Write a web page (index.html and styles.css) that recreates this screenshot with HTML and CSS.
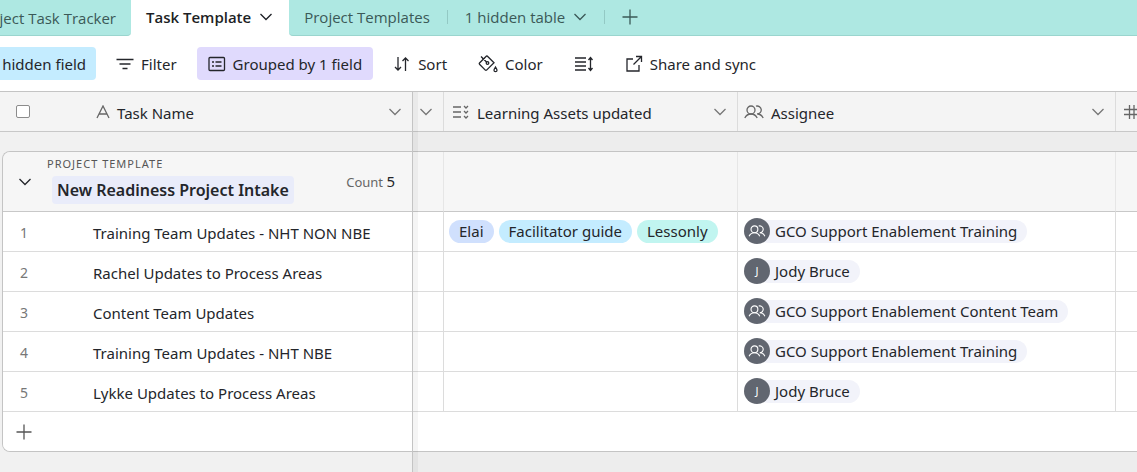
FILE: index.html
```html
<!DOCTYPE html>
<html lang="en">

<head>
    <meta charset="UTF-8">
    <meta name="viewport" content="width=device-width, initial-scale=1.0">
    <title>Task Template</title>
    <link rel="stylesheet" href="styles.css">
</head>

<body>

    <!-- Shared icons -->
    <svg class="sprite" aria-hidden="true">
        <symbol id="chevron" viewBox="0 0 14 14"><path d="M1.5 4 7 9.500 12.500 4" /></symbol>
        <symbol id="plus" viewBox="0 0 16 16"><path d="M8 .5v15M.5 8h15" /></symbol>
        <symbol id="people" viewBox="0 0 20 14">
            <circle cx="7" cy="5" r="4" />
            <path d="M.8 13C2 10.500 4.200 9 7 9s5 1.500 6.200 4M12 1.200A4 4 0 1 1 13.200 9c2.600 0 4.800 1.500 6 4" />
        </symbol>
    </svg>

    <!-- Table Tabs -->
    <nav class="tabs">
        <a href="#" class="tab tab-first"><span>Project Task Tracker</span></a>
        <a href="#" class="tab tab-active">Task Template
            <svg class="icon chevron"><use href="#chevron" /></svg>
        </a>
        <div class="tabs-rest">
            <a href="#" class="tab">Project Templates</a>
            <span class="divider"></span>
            <button type="button" class="tab">1 hidden table
                <svg class="icon chevron"><use href="#chevron" /></svg>
            </button>
            <span class="divider"></span>
            <button type="button" class="tab" aria-label="Add table">
                <svg class="icon plus"><use href="#plus" /></svg>
            </button>
        </div>
    </nav>

    <!-- View Toolbar -->
    <div class="toolbar">
        <button type="button" class="tool tool-hidden"><span>1 hidden field</span></button>
        <button type="button" class="tool">
            <svg class="icon" width="18" height="16" viewBox="0 0 18 16"><path d="M.5 3.500h17M3.500 8h11M6.500 12.500h5" /></svg>
            Filter
        </button>
        <button type="button" class="tool tool-grouped">
            <svg class="icon" width="18" height="16" viewBox="0 0 18 16">
                <rect x="1" y="1.500" width="15.500" height="13" rx="1" />
                <path d="M4 6h2M7.500 6h6M4 10h2M7.500 10h6" />
            </svg>
            Grouped by 1 field
        </button>
        <button type="button" class="tool">
            <svg class="icon" width="18" height="16" viewBox="0 0 18 16"><path d="M5 1v13M2 11l3 3 3-3M12.500 15V2M9.500 5l3-3 3 3" /></svg>
            Sort
        </button>
        <button type="button" class="tool">
            <svg class="icon" width="20" height="20" viewBox="0 0 20 20">
                <path d="M3 2.500l6 6M8.500 2 1.500 9a1 1 0 0 0 0 1.300l5.800 5.800a1 1 0 0 0 1.300 0L16 8.800 9.200 2a.5.5 0 0 0-.7 0Z" />
                <circle cx="9.500" cy="9" r="1.300" />
                <path d="M17.500 13c1 1.500 1.500 2.300 1.500 3.200a1.500 1.500 0 0 1-3 0c0-.9.500-1.700 1.500-3.200Z" />
            </svg>
            Color
        </button>
        <button type="button" class="tool" aria-label="Row height">
            <svg class="icon" width="20" height="16" viewBox="0 0 20 16">
                <path d="M1 2h11M1 6h11M1 10h11M1 14h11M16.500 2v12M14.500 4l2-2.500 2 2.500M14.500 12l2 2.500 2-2.500" />
            </svg>
        </button>
        <button type="button" class="tool">
            <svg class="icon" width="18" height="18" viewBox="0 0 18 18">
                <path d="M8 4H2v12h12v-6M8.500 9.500 16 2M11 1.500h5.500V7" />
            </svg>
            Share and sync
        </button>
    </div>

    <!-- Records Grid -->
    <main class="grid">
        <table>
            <thead>
                <tr>
                    <th class="name-head">
                        <input type="checkbox" aria-label="Select all records">
                        <svg class="icon field-icon" width="14" height="14" viewBox="0 0 14 14"><path d="M1 13 7 1l6 12M3 9h8" /></svg>
                        <span>Task Name</span>
                        <button type="button" aria-label="Task Name menu"><svg class="icon chevron"><use href="#chevron" /></svg></button>
                    </th>
                    <th class="narrow">
                        <button type="button" aria-label="Field menu"><svg class="icon chevron"><use href="#chevron" /></svg></button>
                    </th>
                    <th>
                        <svg class="icon field-icon" width="18" height="14" viewBox="0 0 18 14">
                            <path d="M1 2h8M1 7h8M1 12h8M12 1l2 2 2-2M12 6l2 2 2-2M12 11l2 2 2-2" />
                        </svg>
                        <span>Learning Assets updated</span>
                        <button type="button" aria-label="Learning Assets updated menu"><svg class="icon chevron"><use href="#chevron" /></svg></button>
                    </th>
                    <th class="assignee-head">
                        <svg class="icon field-icon" width="20" height="14"><use href="#people" /></svg>
                        <span>Assignee</span>
                        <button type="button" aria-label="Assignee menu"><svg class="icon chevron"><use href="#chevron" /></svg></button>
                    </th>
                    <th>
                        <svg class="icon field-icon" width="16" height="16" viewBox="0 0 16 16"><path d="M5.500 1v14M10 1v14M0 5.500h16M0 10.500h16" /></svg>
                    </th>
                </tr>
            </thead>
            <tbody>
                <tr class="group">
                    <td class="group-head">
                        <button type="button" aria-label="Collapse group"><svg class="icon chevron"><use href="#chevron" /></svg></button>
                        <div class="group-title">
                            <span class="group-field">PROJECT TEMPLATE</span>
                            <span class="group-value">New Readiness Project Intake</span>
                        </div>
                        <span class="count">Count <b>5</b></span>
                    </td>
                    <td></td>
                    <td></td>
                    <td></td>
                    <td></td>
                </tr>
                <tr>
                    <td class="name"><span class="number">1</span>Training Team Updates - NHT NON NBE</td>
                    <td></td>
                    <td>
                        <span class="pill blue">Elai</span>
                        <span class="pill cyan">Facilitator guide</span>
                        <span class="pill teal">Lessonly</span>
                    </td>
                    <td class="assignee">
                        <span class="avatar"><svg class="icon" width="18" height="12"><use href="#people" /></svg></span>
                        <span class="person">GCO Support Enablement Training</span>
                    </td>
                    <td></td>
                </tr>
                <tr>
                    <td class="name"><span class="number">2</span>Rachel Updates to Process Areas</td>
                    <td></td>
                    <td></td>
                    <td class="assignee"><span class="avatar">J</span><span class="person">Jody Bruce</span></td>
                    <td></td>
                </tr>
                <tr>
                    <td class="name"><span class="number">3</span>Content Team Updates</td>
                    <td></td>
                    <td></td>
                    <td class="assignee">
                        <span class="avatar"><svg class="icon" width="18" height="12"><use href="#people" /></svg></span>
                        <span class="person">GCO Support Enablement Content Team</span>
                    </td>
                    <td></td>
                </tr>
                <tr>
                    <td class="name"><span class="number">4</span>Training Team Updates - NHT NBE</td>
                    <td></td>
                    <td></td>
                    <td class="assignee">
                        <span class="avatar"><svg class="icon" width="18" height="12"><use href="#people" /></svg></span>
                        <span class="person">GCO Support Enablement Training</span>
                    </td>
                    <td></td>
                </tr>
                <tr>
                    <td class="name"><span class="number">5</span>Lykke Updates to Process Areas</td>
                    <td></td>
                    <td></td>
                    <td class="assignee"><span class="avatar">J</span><span class="person">Jody Bruce</span></td>
                    <td></td>
                </tr>
                <tr class="add-row">
                    <td colspan="5">
                        <button type="button" aria-label="Add record"><svg class="icon plus"><use href="#plus" /></svg></button>
                    </td>
                </tr>
            </tbody>
        </table>
        <div class="freeze-line"></div>
    </main>

</body>

</html>
```
FILE: styles.css
```css
* {
    box-sizing: border-box;
}

body {
    margin: 0;
    min-height: 100vh;
    display: flex;
    flex-direction: column;
    font-family: "Noto Sans", "Open Sans", sans-serif;
    font-size: 15px;
    line-height: 20px;
    color: #24262b;
    background: #fff;
    overflow-x: hidden;
}

button {
    font: inherit;
    color: inherit;
    background: none;
    border: none;
    padding: 0;
    display: flex;
    align-items: center;
    cursor: pointer;
}

.sprite {
    display: none;
}

.icon {
    fill: none;
    stroke: currentColor;
    stroke-width: 1.3;
    flex: none;
}

.chevron {
    width: 14px;
    height: 14px;
}

.plus {
    width: 16px;
    height: 16px;
}

/* Table Tabs */
.tabs {
    display: flex;
    height: 36px;
    white-space: nowrap;
    font-family: "Open Sans", "Noto Sans", sans-serif;
}

.tab {
    display: flex;
    align-items: center;
    gap: 8px;
    color: #3b5957;
    text-decoration: none;
}

.tab-first {
    width: 131px;
    flex: none;
    justify-content: flex-end;
    padding-right: 15px;
    overflow: hidden;
    background: #aee8e2;
    border-bottom: 1px solid #9ad5ce;
    border-radius: 0 0 4px 0;
}

.tab-active {
    padding: 0 16px 2px 15px;
    color: #1d1f25;
    font-weight: 600;
}

.tabs-rest {
    flex: 1;
    display: flex;
    align-items: center;
    gap: 17px;
    padding: 0 0 2px 15px;
    background: #aee8e2;
    border-bottom: 1px solid #9ad5ce;
    border-radius: 0 0 0 4px;
}

.divider {
    width: 1px;
    height: 14px;
    background: #93c9c4;
}

/* Toolbar */
.toolbar {
    display: flex;
    align-items: center;
    gap: 9px;
    height: 55px;
    white-space: nowrap;
}

.tool {
    height: 33px;
    gap: 7px;
    padding: 0 11px;
    border-radius: 4px;
}

.tool-hidden {
    width: 96px;
    flex: none;
    justify-content: flex-end;
    overflow: hidden;
    padding-right: 10px;
    border-radius: 0 4px 4px 0;
    background: #c4ecff;
}

.tool-grouped {
    background: #e0dafd;
}

/* Records Grid */
.grid {
    position: relative;
    flex: 1;
    border-top: 1px solid #c4c4c4;
    background: linear-gradient(to right, #f1f1f1 413px, #ededed 413px);
}

table,
thead,
tbody {
    display: block;
}

thead tr {
    display: grid;
    grid-template-columns: 411px 31px 294px 378px 1fr;
}

tbody tr {
    display: grid;
    grid-template-columns: 410px 31px 294px 378px 1fr;
}

th,
td {
    display: flex;
    align-items: center;
    min-width: 0;
    padding: 0 0 0 5px;
    overflow: hidden;
    white-space: nowrap;
    border-right: 1px solid #dcdcdc;
}

td {
    height: 40px;
    gap: 5px;
    background: #fff;
    border-bottom: 1px solid #dcdcdc;
}

th {
    height: 39px;
    padding: 0 10px 0 8px;
    font-weight: 400;
    gap: 7px;
}

th:last-child,
td:last-child {
    border-right: none;
}

thead {
    padding-left: 2px;
    background: #f4f4f4;
    border-bottom: 1px solid #c8c8c8;
}

th span {
    padding-top: 2px;
}

th button {
    margin-left: auto;
    color: #777;
}

.field-icon {
    color: #666;
}

.name-head {
    padding-left: 14px;
}

.name-head input {
    appearance: none;
    width: 14px;
    height: 13px;
    margin: 0 59px 0 0;
    border: 1px solid #8c8c8c;
    border-radius: 2px;
    background: #fff;
}

.narrow {
    padding: 0 10px 0 0;
}

.assignee-head {
    padding-left: 6px;
}

tbody {
    margin: 19px 0 0 2px;
    border: 1px solid #c4c4c4;
    border-right: none;
    border-radius: 8px 0 0 8px;
    overflow: hidden;
}

.group td {
    height: 60px;
    background: #f6f6f6;
    border-color: #e6e6e6;
    border-bottom-color: #c8c8c8;
}

.group .group-head {
    padding: 0 17px 0 15px;
    gap: 15px;
}

.group-title {
    display: flex;
    flex-direction: column;
    align-items: flex-start;
    gap: 5px;
    padding-bottom: 2px;
}

.group-field {
    font-size: 11px;
    line-height: 14px;
    letter-spacing: 1px;
    color: #555;
}

.group-value {
    margin-left: 5px;
    padding: 0 5px;
    border-radius: 4px;
    font-size: 16px;
    line-height: 28px;
    font-weight: 600;
    background: #e9ecfa;
}

.count {
    margin-left: auto;
    font-size: 13px;
    color: #666;
}

.count b {
    font-size: 15px;
    font-weight: 400;
    color: #24262b;
}

.name {
    padding: 3px 0 0 17px;
}

.number {
    width: 68px;
    font-size: 14px;
    color: #777;
}

.pill {
    padding: 0 10px;
    border-radius: 12px;
    line-height: 23px;
}

.blue {
    background: #d0e0fd;
}

.cyan {
    background: #c4ecff;
}

.teal {
    background: #c1f5f0;
}

.assignee {
    padding-bottom: 1px;
}

.avatar {
    z-index: 1;
    flex: none;
    width: 26px;
    height: 26px;
    margin-left: 1px;
    display: flex;
    align-items: center;
    justify-content: center;
    border-radius: 50%;
    font-size: 11px;
    color: #fff;
    background: #616670;
}

.person {
    margin-left: -18px;
    padding: 0 10px 0 18px;
    border-radius: 12px;
    line-height: 23px;
    background: #f2f3fa;
}

.add-row {
    display: block;
}

.add-row td {
    height: 39px;
    padding-left: 13px;
    border-bottom: none;
    color: #555;
}

/* Edge of the frozen column, drawn over the whole grid */
.freeze-line {
    position: absolute;
    top: 0;
    bottom: 0;
    left: 412px;
    width: 6px;
    border-left: 1px solid #c4c4c4;
    background: rgba(0, 0, 0, 0.04);
    pointer-events: none;
}
```
